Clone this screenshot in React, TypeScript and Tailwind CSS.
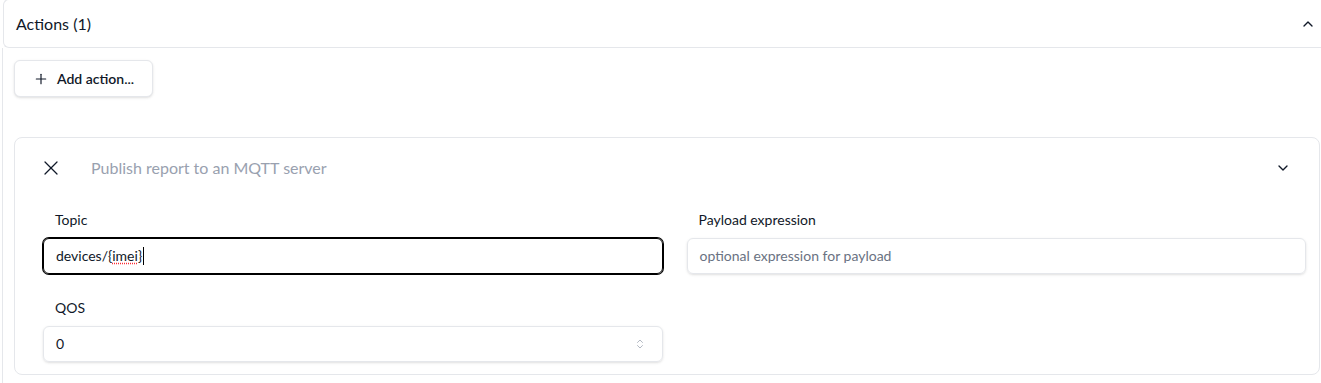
import { ChevronDown, ChevronUp, ChevronsUpDown, Plus, X } from "lucide-react";

export default function App() {
  return (
    <div className="h-[383px] w-[1321px] overflow-hidden bg-white font-['Lato','Noto_Sans',sans-serif] text-gray-900">
      {/* Accordion header */}
      <div className="-mt-px ml-[3px] flex h-[49px] items-center justify-between rounded-l-md border border-r-0 border-gray-200 pl-3 pr-[5px]">
        <span className="text-base">Actions (1)</span>
        <ChevronUp className="h-4 w-4" strokeWidth={2} />
      </div>

      {/* Accordion body */}
      <div className="ml-[2px] h-[340px] border-l border-gray-200 pl-[11px] pt-3">
        <button className="flex h-[37px] items-center gap-2 rounded-md border border-gray-200 bg-white pl-[18px] pr-[18px] text-sm font-semibold shadow-sm">
          <Plus className="h-4 w-4" strokeWidth={1.75} />
          Add action...
        </button>

        <div className="mt-10 mr-px rounded-lg border border-gray-200 bg-white pb-3 pl-7 pr-[13px]">
          <div className="flex h-[60px] items-center">
            <X className="-ml-1 h-6 w-6" strokeWidth={1.25} />
            <span className="ml-7 text-base text-gray-400">Publish report to an MQTT server</span>
            <ChevronDown className="ml-auto mr-[15px] h-4 w-4" strokeWidth={2} />
          </div>

          <div className="grid grid-cols-2 gap-x-6 gap-y-6 pt-3">
            <div className="flex flex-col gap-2">
              <label className="px-3 text-sm">Topic</label>
              <div className="flex h-9 items-center rounded-md border border-black px-3 text-sm ring-1 ring-black">
                devices/{"{"}
                <span className="underline decoration-red-500 decoration-dotted underline-offset-2">imei</span>
                {"}"}
                <span className="ml-px h-[18px] w-px bg-black" />
              </div>
            </div>
            <div className="flex flex-col gap-2">
              <label className="px-3 text-sm">Payload expression</label>
              <div className="flex h-9 items-center rounded-md border border-gray-200 px-3 text-sm text-gray-500 shadow-sm">
                optional expression for payload
              </div>
            </div>
            <div className="flex flex-col gap-2">
              <label className="px-3 text-sm">QOS</label>
              <div className="flex h-9 items-center justify-between rounded-md border border-gray-200 pl-3 pr-4 text-sm shadow-sm">
                <span>0</span>
                <ChevronsUpDown className="h-3 w-3 text-gray-400" strokeWidth={1.5} />
              </div>
            </div>
          </div>
        </div>
      </div>
    </div>
  );
}
